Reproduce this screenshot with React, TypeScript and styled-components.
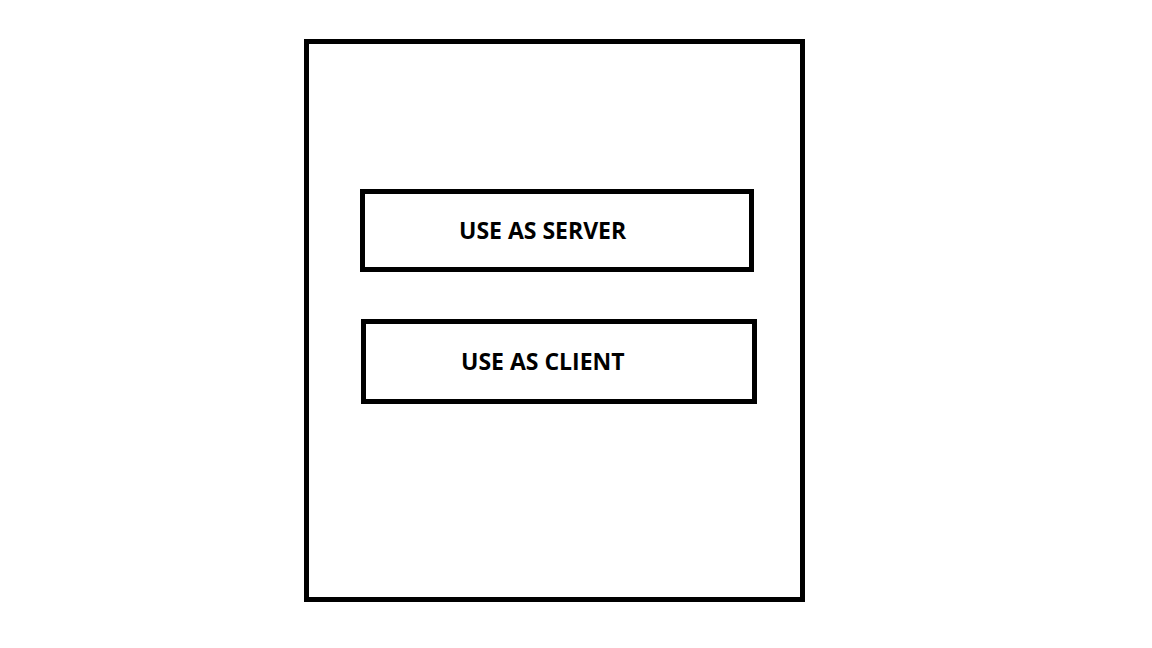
import styled, { createGlobalStyle } from "styled-components";

const GlobalStyle = createGlobalStyle`
  html, body {
    margin: 0;
    padding: 0;
    background: #ffffff;
  }
  body {
    font-family: "Open Sans", "Noto Sans", "Liberation Sans", sans-serif;
  }
`;

const Page = styled.div`
  width: 1152px;
  height: 648px;
  box-sizing: border-box;
  padding: 39px 0 0 304px;
  background: #ffffff;
`;

const Frame = styled.div`
  width: 501px;
  height: 563px;
  box-sizing: border-box;
  border: 5px solid #000000;
  padding: 145px 0 0 51px;
  display: flex;
  flex-direction: column;
  gap: 47px;
`;

const ModeButton = styled.button<{ $width: number; $height: number; $shift: number }>`
  width: ${(p) => p.$width}px;
  height: ${(p) => p.$height}px;
  margin-left: ${(p) => p.$shift}px;
  box-sizing: border-box;
  border: 5px solid #000000;
  background: #ffffff;
  padding: 0 0 0 ${(p) => (p.$shift ? 95 : 94)}px;
  display: flex;
  align-items: center;
  justify-content: flex-start;
  font-family: "Open Sans", "Noto Sans", sans-serif;
  font-weight: 700;
  font-size: 23px;
  line-height: 1;
  color: #000000;
  cursor: pointer;
`;

const modes = [
  { id: "server", label: "USE AS SERVER", width: 394, height: 83, shift: 0 },
  { id: "client", label: "USE AS CLIENT", width: 396, height: 85, shift: 1 },
];

export default function App() {
  return (
    <>
      <GlobalStyle />
      <Page>
        <Frame>
          {modes.map((m) => (
            <ModeButton key={m.id} $width={m.width} $height={m.height} $shift={m.shift}>
              {m.label}
            </ModeButton>
          ))}
        </Frame>
      </Page>
    </>
  );
}
